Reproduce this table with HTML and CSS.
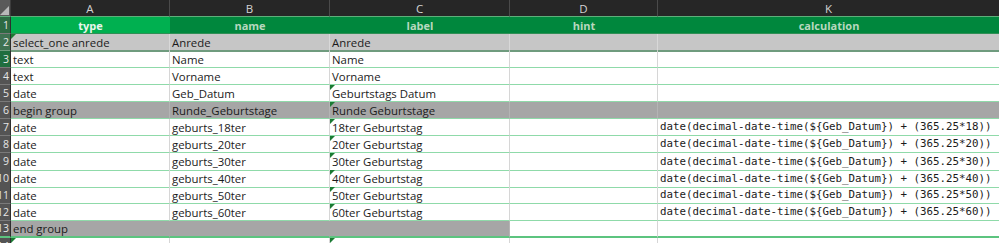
FILE: index.html
```html
<!DOCTYPE html>
<html lang="de">
<head>
<meta charset="utf-8">
<title>Sheet</title>
<link rel="stylesheet" href="styles.css">
</head>
<body>
<div class="sheet">
  <div class="corner"></div>
  <div class="colhead">A</div>
  <div class="colhead">B</div>
  <div class="colhead">C</div>
  <div class="colhead">D</div>
  <div class="colhead">K</div>

  <div class="rh r1 rh-g1"><span>1</span></div>
  <div class="c r1 hdr active">type</div>
  <div class="c r1 hdr">name</div>
  <div class="c r1 hdr">label</div>
  <div class="c r1 hdr">hint</div>
  <div class="c r1 hdr">calculation</div>

  <div class="rh r2 rh-g2"><span>2</span></div>
  <div class="c r2 lg tri">select_one anrede</div>
  <div class="c r2 lg">Anrede</div>
  <div class="c r2 lg">Anrede</div>
  <div class="c r2 lg"></div>
  <div class="c r2 lg"></div>

  <div class="rh rh-g3"><span>3</span></div>
  <div class="c">text</div>
  <div class="c">Name</div>
  <div class="c">Name</div>
  <div class="c"></div>
  <div class="c"></div>

  <div class="rh"><span>4</span></div>
  <div class="c">text</div>
  <div class="c">Vorname</div>
  <div class="c">Vorname</div>
  <div class="c"></div>
  <div class="c"></div>

  <div class="rh"><span>5</span></div>
  <div class="c">date</div>
  <div class="c">Geb_Datum</div>
  <div class="c tri">Geburtstags Datum</div>
  <div class="c"></div>
  <div class="c"></div>

  <div class="rh"><span>6</span></div>
  <div class="c dg">begin group</div>
  <div class="c dg">Runde_Geburtstage</div>
  <div class="c dg tri">Runde Geburtstage</div>
  <div class="c dg"></div>
  <div class="c dg"></div>

  <div class="rh"><span>7</span></div>
  <div class="c">date</div>
  <div class="c">geburts_18ter</div>
  <div class="c tri">18ter Geburtstag</div>
  <div class="c"></div>
  <div class="c mono">date(decimal-date-time(${Geb_Datum}) + (365.25*18))</div>

  <div class="rh"><span>8</span></div>
  <div class="c">date</div>
  <div class="c">geburts_20ter</div>
  <div class="c tri">20ter Geburtstag</div>
  <div class="c"></div>
  <div class="c mono">date(decimal-date-time(${Geb_Datum}) + (365.25*20))</div>

  <div class="rh tall"><span>9</span></div>
  <div class="c tall">date</div>
  <div class="c tall">geburts_30ter</div>
  <div class="c tall tri">30ter Geburtstag</div>
  <div class="c tall"></div>
  <div class="c tall mono">date(decimal-date-time(${Geb_Datum}) + (365.25*30))</div>

  <div class="rh tall"><span>10</span></div>
  <div class="c tall">date</div>
  <div class="c tall">geburts_40ter</div>
  <div class="c tall tri">40ter Geburtstag</div>
  <div class="c tall"></div>
  <div class="c tall mono">date(decimal-date-time(${Geb_Datum}) + (365.25*40))</div>

  <div class="rh"><span>11</span></div>
  <div class="c">date</div>
  <div class="c">geburts_50ter</div>
  <div class="c tri">50ter Geburtstag</div>
  <div class="c"></div>
  <div class="c mono">date(decimal-date-time(${Geb_Datum}) + (365.25*50))</div>

  <div class="rh"><span>12</span></div>
  <div class="c">date</div>
  <div class="c">geburts_60ter</div>
  <div class="c tri">60ter Geburtstag</div>
  <div class="c"></div>
  <div class="c mono">date(decimal-date-time(${Geb_Datum}) + (365.25*60))</div>

  <div class="rh r13"><span>13</span></div>
  <div class="c r13 dg nb">end group</div>
  <div class="c r13 dg nb"></div>
  <div class="c r13 dg"></div>
  <div class="c r13"></div>
  <div class="c r13"></div>

  <div class="rh r14"><span>14</span></div>
  <div class="c r14 tri"></div>
  <div class="c r14"></div>
  <div class="c r14 tri"></div>
  <div class="c r14"></div>
  <div class="c r14"></div>
</div>
</body>
</html>
```

FILE: styles.css
```css
html, body {
  margin: 0;
  padding: 0;
  background: #ffffff;
  overflow: hidden;
}

.sheet {
  display: grid;
  grid-template-columns: 11px 159px 160px 180px 148px 342px;
  grid-auto-rows: 17px;
  width: 1000px;
  font-family: "Open Sans", "Liberation Sans", sans-serif;
  font-size: 11.4px;
  color: #1b1b1b;
}

.corner {
  height: 17px;
  box-sizing: border-box;
  background: #5a5a5a;
  border-right: 1px solid #3d3d3d;
  border-bottom: 1px solid #5fae7a;
  position: relative;
  overflow: hidden;
}
.corner::after {
  content: "";
  position: absolute;
  right: 1px;
  bottom: 1px;
  border-style: solid;
  border-width: 0 0 9px 9px;
  border-color: transparent transparent #b9b9b9 transparent;
}

.colhead {
  height: 17px;
  box-sizing: border-box;
  background: #262626;
  color: #d4d4d4;
  border-right: 1px solid #4a4a4a;
  border-bottom: 1px solid #5fae7a;
  display: flex;
  align-items: center;
  justify-content: center;
  font-size: 11.5px;
  line-height: 1;
  padding-top: 1px;
}

.rh {
  box-sizing: border-box;
  background: #545454;
  border-bottom: 1px solid #7a7a7a;
  border-right: 1px solid #2e2e2e;
  overflow: hidden;
  display: flex;
  align-items: center;
  justify-content: flex-end;
  color: #e6e6e6;
  font-size: 10.5px;
  line-height: 1;
}
.rh span {
  margin-right: 1px;
  flex: none;
}
.rh-g1 { background: #2d6a43; }
.rh-g2 { background: #3f7252; }
.rh-g3 { background: #1f6e3f; }

.c {
  box-sizing: border-box;
  border-right: 1px solid #d6d6d6;
  border-bottom: 1px solid #8fdaa9;
  padding-left: 2px;
  padding-top: 1px;
  white-space: nowrap;
  overflow: hidden;
  display: flex;
  align-items: center;
  line-height: 1;
  position: relative;
}

.tall { height: 18px; }

.hdr {
  background: #00873d;
  color: #b7d8bf;
  font-weight: 700;
  font-size: 11px;
  justify-content: center;
  padding-left: 0;
  padding-top: 0;
  border-right: none;
  border-bottom: 1px solid #2f8f55;
}
.hdr.active {
  background: #00b050;
  color: #e9f6ec;
}

.r2 {
  height: 18px;
  border-bottom: 2px solid #6f9b7e;
}
.lg {
  background: #c6c6c6;
  border-right-color: #d8d8d8;
}
.dg {
  background: #a6a6a6;
  border-right-color: #b4b4b4;
}
.nb { border-right-color: #a6a6a6; }

.r13 { border-bottom: 2px solid #5cc47f; }

.mono {
  font-family: "DejaVu Sans Mono", "Liberation Mono", monospace;
  font-size: 10.8px;
  padding-left: 2px;
}

.tri::before {
  content: "";
  position: absolute;
  left: 0;
  top: 0;
  border-style: solid;
  border-width: 5px 5px 0 0;
  border-color: #1b7a33 transparent transparent transparent;
}

.r14 { border-bottom: none; }
```
